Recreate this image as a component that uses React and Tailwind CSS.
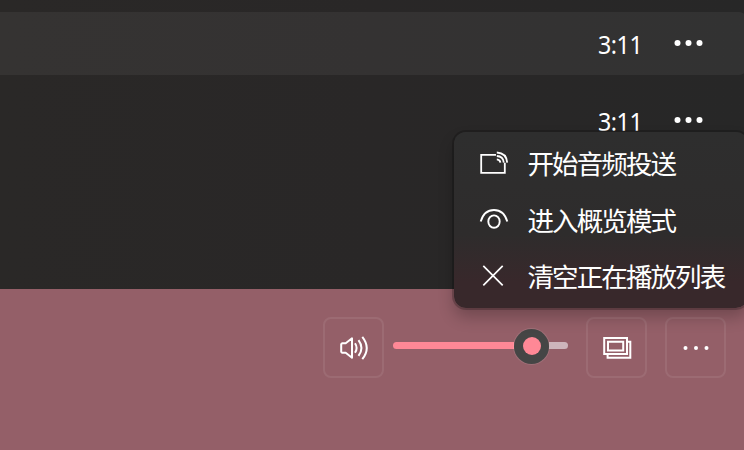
function MoreDots() {
  return (
    <svg className="h-8 w-8" viewBox="0 0 32 32" fill="white">
      <circle cx="5.5" cy="16" r="3" />
      <circle cx="16.5" cy="16" r="3" />
      <circle cx="27.5" cy="16" r="3" />
    </svg>
  );
}

function TrackRow({ time, active }) {
  return (
    <div className={`flex h-[63px] w-[747px] shrink-0 items-start rounded-r-lg ${active ? "bg-white/[0.055]" : ""}`}>
      <span className="ml-[598px] mt-[14px] w-[74px] origin-left scale-x-[.93] text-[25px] leading-[36px] tracking-[-0.5px]">{time}</span>
      <span className="mt-[14.5px]"><MoreDots /></span>
    </div>
  );
}

function CastIcon() {
  return (
    <svg className="h-8 w-8" viewBox="0 0 32 32" fill="none" stroke="white" strokeWidth="1.8">
      <path d="M18 6.8H3.2V24.8H26.8V14.8" />
      <path d="M18.8 11.4Q22 11.7 22.4 14.6M18.8 8Q25.2 8.3 25.8 14.6M18.8 4.5Q28.4 5 29.2 14.6" />
    </svg>
  );
}

function OverviewIcon() {
  return (
    <svg className="h-8 w-8" viewBox="0 0 32 32" fill="none" stroke="white" strokeWidth="1.9">
      <path d="M2.7 17.6C5 9.7 10 6 16 6S27 9.7 29.3 17.6" />
      <ellipse cx="16" cy="17.6" rx="5.7" ry="6.2" />
    </svg>
  );
}

function ClearIcon() {
  return (
    <svg className="h-8 w-8" viewBox="0 0 32 32" fill="none" stroke="white" strokeWidth="1.7">
      <path d="M5.3 4.9 24.7 24.3M24.7 4.9 5.3 24.3" />
    </svg>
  );
}

function MenuItem({ icon, label }) {
  return (
    <div className="flex h-[56.5px] items-center pl-6">
      {icon}
      <span className="ml-[17.5px] mt-px whitespace-nowrap text-[26.5px] leading-9 tracking-[-1.9px]">{label}</span>
    </div>
  );
}

function ControlButton({ children }) {
  return (
    <button className="flex h-[61px] w-[61px] shrink-0 items-center justify-center rounded-[8px] border-2 border-white/[0.08]">
      {children}
    </button>
  );
}

export default function App() {
  return (
    <div className="relative flex h-[450px] w-[744px] flex-col overflow-hidden bg-[#292727] font-['Noto_Sans','Noto_Sans_CJK_SC',sans-serif] text-white">
      <div className="flex h-[289px] shrink-0 flex-col gap-[14px] overflow-hidden bg-linear-to-r from-[#2a2827] via-[#292727] to-[#272727] pt-3">
        <TrackRow time="3:11" active />
        <TrackRow time="3:11" />
      </div>

      <div className="flex flex-1 items-start bg-[#945f68] pl-[323px] pt-7">
        <ControlButton>
          <svg className="h-8 w-8" viewBox="0 0 32 32" fill="none" stroke="white" strokeWidth="2" strokeLinejoin="round">
            <path d="M3.2 12.2 4.2 11.2H7.7L14 6.3V25.7L7.7 20.8H4.2L3.2 19.8Z" />
            <path d="M17 11.3Q20.2 16 17 20.7M20.5 8.1Q26.4 16 20.5 23.9M24.3 4.8Q33.2 16 24.3 27.2" />
          </svg>
        </ControlButton>
        <div className="ml-[9px] mt-[11px] flex h-9 w-[175px] shrink-0 items-center">
          <div className="mb-[2px] h-[7px] w-[121px] rounded-l-full bg-[#ff8896]" />
          <div className="flex h-[35px] w-[35px] shrink-0 items-center justify-center rounded-full bg-[#454545] ring-1 ring-white/10">
            <div className="h-[18px] w-[18px] rounded-full bg-[#ff8896]" />
          </div>
          <div className="mb-[2px] h-[7px] flex-1 rounded-r-full bg-[#cdb5bb]" />
        </div>
        <div className="ml-[18px] flex gap-[18px]">
          <ControlButton>
            <svg className="h-8 w-8" viewBox="0 0 32 32" fill="none" stroke="white" strokeWidth="2">
              <path d="M3.2 6H26V22H3.2ZM7 9.8H22.2V18.4H7ZM26 9.8H29.3V25.7H6.6V22" />
            </svg>
          </ControlButton>
          <ControlButton>
            <svg className="h-8 w-8" viewBox="0 0 32 32" fill="white">
              <circle cx="5.5" cy="16" r="2" />
              <circle cx="16" cy="16" r="2" />
              <circle cx="26.5" cy="16" r="2" />
            </svg>
          </ControlButton>
        </div>
      </div>

      <div className="absolute left-[454px] top-[132px] h-[176px] w-[294px] rounded-xl bg-linear-to-b from-[#2e2e2e] from-0% via-[#2e2c2c] via-58% to-[#38282b] to-85% pt-[3.5px] shadow-[0_0_0_2px_rgba(0,0,0,0.2),0_9px_16px_rgba(0,0,0,0.24)]">
        <MenuItem icon={<CastIcon />} label="开始音频投送" />
        <MenuItem icon={<OverviewIcon />} label="进入概览模式" />
        <MenuItem icon={<ClearIcon />} label="清空正在播放列表" />
      </div>
    </div>
  );
}
